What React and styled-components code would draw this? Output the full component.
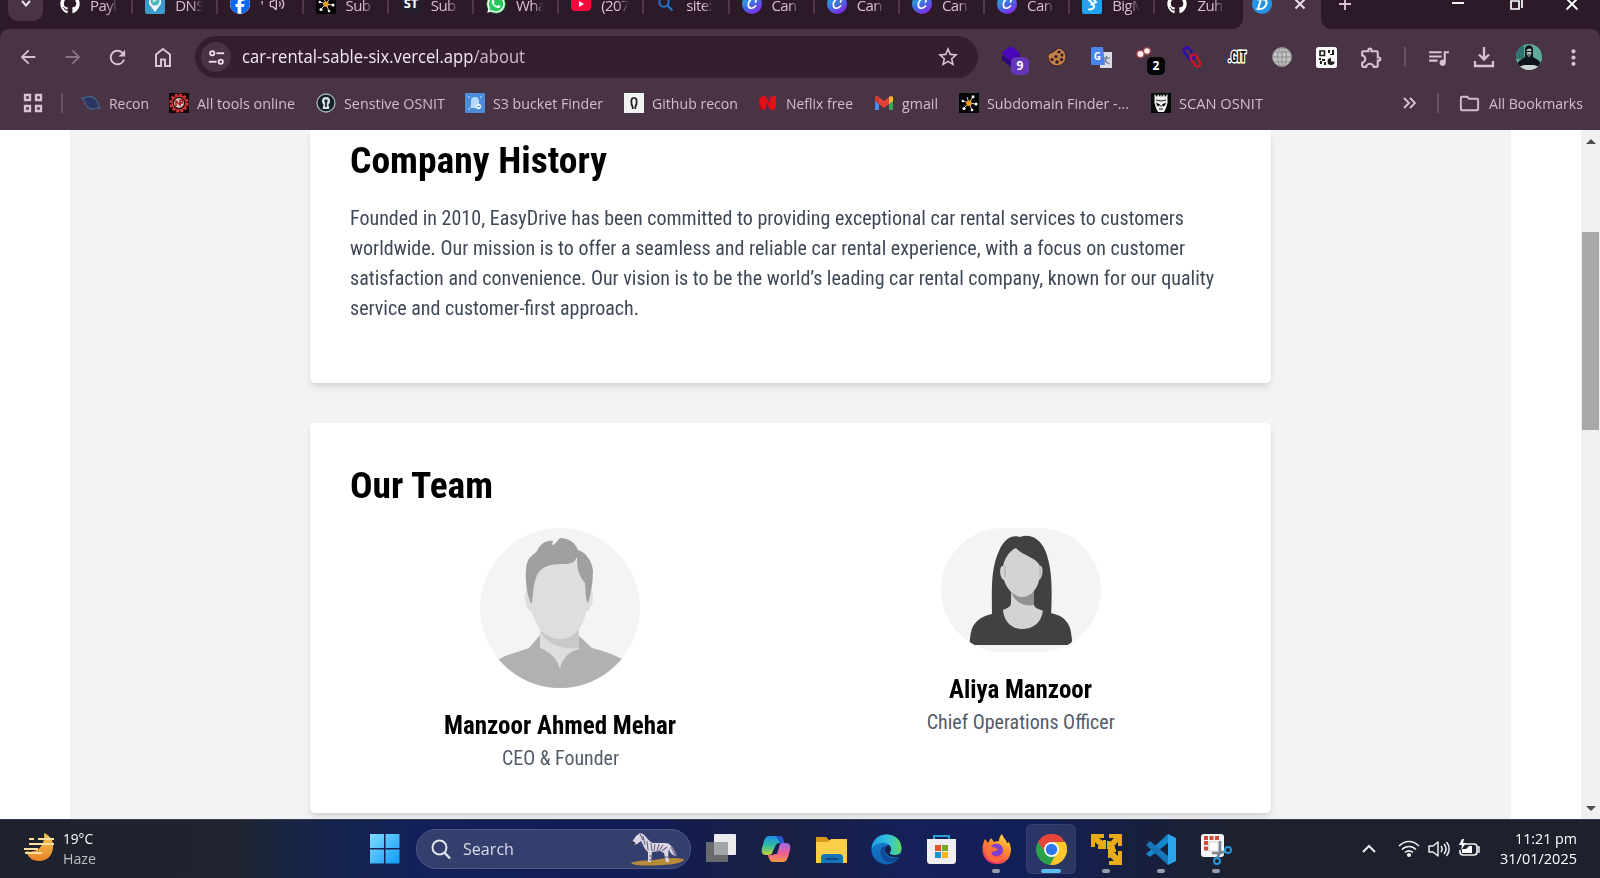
import React, { useLayoutEffect, useRef, useState } from "react";
import styled, { createGlobalStyle } from "styled-components";
import { FaGithub, FaFacebook, FaWhatsapp } from "react-icons/fa6";
import {
  MdArrowBack,
  MdArrowForward,
  MdRefresh,
  MdStarBorder,
  MdQueueMusic,
  MdOutlineExtension,
  MdMoreVert,
  MdOutlineFolder,
} from "react-icons/md";
import { Volume2 } from "lucide-react";

const ui = `"Segoe UI", "Open Sans", "Noto Sans", sans-serif`;
const condensed = `"Roboto Condensed", Roboto, sans-serif`;
const frame = "#493445";
const strip = "#2c1a29";
const tint = "#d9c0d2";

const Global = createGlobalStyle`
  * { box-sizing: border-box; }
  body { margin: 0; overflow: hidden; background: #fff; font-family: ${ui}; }
  svg { display: block; flex: none; }
  h2, h3, p { margin: 0; }
`;

/* Text squeezed or stretched to a given width. */
const FitBox = styled.span`
  display: block;
  flex: none;
  width: ${(p) => p.$w}px;
  white-space: nowrap;
`;
const FitInner = styled.span`
  display: inline-block;
  transform-origin: 0 50%;
`;
function Fit({ w, children }) {
  const ref = useRef(null);
  const [scale, setScale] = useState(1);
  useLayoutEffect(() => {
    const natural = ref.current.getBoundingClientRect().width;
    if (natural) setScale(w / natural);
  }, [w]);
  return (
    <FitBox $w={w}>
      <FitInner ref={ref} style={{ transform: `scaleX(${scale})` }}>{children}</FitInner>
    </FitBox>
  );
}

const Screen = styled.div`
  width: 1600px;
  height: 878px;
  display: flex;
  flex-direction: column;
  overflow: hidden;
`;

/* ---------- Browser frame ---------- */
const Chrome = styled.header`
  flex: none;
  height: 130px;
  background: ${strip};
  color: ${tint};
`;
const Strip = styled.div`
  height: 29px;
  display: flex;
  background: ${frame};
`;
const TabsPanel = styled.div`
  flex: none;
  width: 1243px;
  display: flex;
  padding-left: 8px;
  background: ${strip};
  border-bottom-right-radius: 11px;
`;
const TabSearch = styled.div`
  flex: none;
  width: 35px;
  height: 21px;
  margin-right: 5px;
  background: ${frame};
  border-radius: 0 0 10px 10px;
  display: flex;
  justify-content: center;
`;
const Tab = styled.div`
  flex: none;
  width: 85.2px;
  height: 29px;
  display: flex;
  padding-left: 12px;
`;
const TabIcon = styled.div`
  width: 20px;
  height: 20px;
  margin-top: -6px;
  margin-right: 10px;
`;
const TabTitle = styled.div`
  width: 28px;
  height: 20px;
  margin-top: -5px;
  overflow: hidden;
  white-space: nowrap;
  font-size: 15px;
  line-height: 20px;
  letter-spacing: -0.6px;
  mask-image: linear-gradient(90deg, #000 60%, transparent 100%);
`;
const TabSound = styled.div`
  margin: -4px 0 0 -19px;
`;
const TabLine = styled.i`
  width: 2px;
  height: 14px;
  margin-left: auto;
  background: #51394c;
`;
const ActiveTab = styled.div`
  flex: none;
  width: 78px;
  display: flex;
  padding-left: 9px;
`;
const CloseCell = styled.div`
  margin: -4px 0 0 10px;
`;
const WindowPanel = styled.div`
  flex: 1;
  display: flex;
  background: ${strip};
  border-bottom-left-radius: 11px;
  padding-left: 16px;
`;
const WindowCell = styled.div`
  flex: none;
  width: ${(p) => p.$w}px;
  height: 20px;
  margin-top: -6px;
  margin-right: ${(p) => p.$mr || 0}px;
  display: flex;
  align-items: center;
  justify-content: center;
`;

const Bar = styled.div`
  height: 56px;
  padding-top: 7px;
  display: flex;
  background: ${frame};
  border-radius: 9px 9px 0 0;
`;
const NavButton = styled.div`
  flex: none;
  width: 45px;
  height: 42px;
  display: flex;
  align-items: center;
  justify-content: center;
  position: relative;
  opacity: ${(p) => (p.$dim ? 0.45 : 1)};
`;
const NavGroup = styled.div`
  flex: none;
  display: flex;
  width: 195px;
  padding-left: 5px;
`;
const Omnibox = styled.div`
  flex: none;
  width: 783px;
  height: 42px;
  border-radius: 21px;
  background: #341f30;
  display: flex;
  align-items: center;
  padding: 0 18px 0 6px;
`;
const SiteInfo = styled.div`
  width: 30px;
  height: 30px;
  border-radius: 50%;
  background: ${frame};
  display: flex;
  align-items: center;
  justify-content: center;
  margin-right: 11px;
`;
const Url = styled.div`
  flex: 1;
  padding-bottom: 2px;
  font-size: 17.5px;
  color: #f3e6f0;
`;
const UrlPath = styled.span`
  color: #cfb9c9;
`;
const Extensions = styled.div`
  display: flex;
  padding-left: 11px;
`;
const Badge = styled.b`
  position: absolute;
  left: ${(p) => p.$x}px;
  top: 21px;
  width: 18px;
  height: 18px;
  border-radius: 5px;
  background: ${(p) => p.$bg};
  color: #fff;
  font-size: 12px;
  line-height: 18px;
  text-align: center;
`;
const Divider = styled.i`
  flex: none;
  width: 2px;
  height: 20px;
  margin: ${(p) => p.$m};
  background: #6a5065;
`;

const Bookmarks = styled.nav`
  height: 45px;
  padding: 0 17px 9px 22.5px;
  display: flex;
  align-items: center;
  background: ${frame};
  color: #d3bccc;
  font-size: 15px;
`;
const Bookmark = styled.div`
  display: flex;
  align-items: center;
  gap: 8px;
  margin-right: ${(p) => p.$mr ?? 20.6}px;
`;
const BookmarkText = styled.div`
  padding-bottom: 1px;
`;
const Spacer = styled.div`
  flex: 1;
`;

/* ---------- Page ---------- */
const Viewport = styled.main`
  flex: none;
  height: 689px;
  display: flex;
  padding-left: 70px;
  background: #fff;
  overflow: hidden;
`;
const Content = styled.div`
  flex: none;
  width: 1441px;
  margin-right: 70px;
  background: #f2f3f5;
  display: flex;
  flex-direction: column;
  align-items: center;
  gap: 40px;
  font-family: ${condensed};
  font-stretch: 75%;
`;
const Card = styled.section`
  flex: none;
  width: 961px;
  height: ${(p) => p.$h}px;
  background: #fff;
  border-radius: ${(p) => (p.$cut ? "0 0 5px 5px" : "5px")};
  padding: ${(p) => (p.$cut ? 8 : 40)}px 40px 0;
  box-shadow: 0 5px 8px -1px rgba(0, 0, 0, 0.1), 0 2px 5px -2px rgba(0, 0, 0, 0.1);
`;
const Title = styled.h2`
  font-size: 37.5px;
  line-height: 45px;
  font-weight: 700;
  color: #000;
`;
const Paragraph = styled.p`
  margin-top: 19.5px;
  font-size: 20px;
  line-height: 30px;
  color: #3f4856;
`;
const Team = styled.div`
  margin-top: 20px;
  display: grid;
  grid-template-columns: 1fr 1fr;
  gap: 40px;
`;
const Member = styled.article`
  display: flex;
  flex-direction: column;
  align-items: center;
`;
const Portrait = styled.div`
  width: 160px;
  height: ${(p) => p.$h}px;
  border-radius: 80px;
  overflow: hidden;
  background: #f4f4f4;
`;
const Name = styled.h3`
  margin-top: 21px;
  font-size: 25px;
  line-height: 34px;
  font-weight: 700;
`;
const Role = styled.p`
  font-size: 20px;
  line-height: 30px;
  color: #525c68;
`;
const Scrollbar = styled.aside`
  flex: none;
  width: 19px;
  background: #f1f1f1;
  display: flex;
  flex-direction: column;
  align-items: center;
`;
const Arrow = styled.i`
  border: 5px solid transparent;
  border-top-width: ${(p) => (p.$up ? 0 : 5)}px;
  border-bottom-width: ${(p) => (p.$up ? 5 : 0)}px;
  border-${(p) => (p.$up ? "bottom" : "top")}-color: #4e4e4e;
  margin-top: ${(p) => (p.$up ? 9 : 0)}px;
`;
const Thumb = styled.div`
  width: 17px;
  height: 198px;
  margin: 88px 0 376px;
  background: #a8a8a8;
`;

/* ---------- Taskbar ---------- */
const Taskbar = styled.footer`
  flex: none;
  height: 59px;
  display: flex;
  color: #fff;
  border-top: 1px solid #343b4e;
  background: linear-gradient(90deg, #1e222c 0, #1e232d 235px, #182541 285px, #15234e 340px, #13205a 430px, #121c55 640px, #1a1f42 780px, #142057 900px, #132057 1040px, #181f3e 1140px, #1d212e 1240px, #1d212c 1600px);
`;
const Weather = styled.div`
  flex: none;
  width: 360px;
  padding: 9px 0 0 24px;
  display: flex;
  gap: 9px;
  font-size: 14.5px;
  line-height: 20px;
`;
const WeatherIcon = styled.div`
  margin-top: 4px;
`;
const Muted = styled.div`
  color: #b9bdc5;
`;
const Slot = styled.div`
  flex: none;
  position: relative;
  width: 50px;
  height: 50px;
  margin: 4px 5px 0 0;
  border-radius: 6px;
  display: flex;
  align-items: center;
  justify-content: center;
  background: ${(p) => (p.$active ? "rgba(255,255,255,.1)" : "none")};
  box-shadow: ${(p) => (p.$active ? "inset 0 0 0 1px rgba(255,255,255,.06)" : "none")};
`;
const Running = styled.i`
  position: absolute;
  bottom: 1px;
  left: calc(50% - ${(p) => (p.$active ? 10 : 4)}px);
  width: ${(p) => (p.$active ? 20 : 8)}px;
  height: 4px;
  border-radius: 2px;
  background: ${(p) => (p.$active ? "#5cbcf0" : "#9a9dab")};
`;
const SearchBox = styled.div`
  flex: none;
  width: 275px;
  height: 40px;
  margin: 9px 5px 0 1px;
  padding: 0 5px 0 14px;
  border-radius: 20px;
  border: 1px solid #4e5987;
  background: #343f6d;
  display: flex;
  align-items: center;
  color: #d9dcea;
  font-size: 17px;
`;
const SearchText = styled.div`
  flex: 1;
  padding: 0 0 2px 12px;
`;
const Tray = styled.div`
  margin-left: auto;
  padding-right: 23px;
  display: flex;
`;
const TrayIcon = styled.div`
  width: ${(p) => p.$w || 30}px;
  height: 58px;
  display: flex;
  align-items: center;
  justify-content: center;
`;
const Clock = styled.div`
  width: 93px;
  padding-top: 8px;
  display: flex;
  flex-direction: column;
  align-items: flex-end;
  font-size: 15px;
  line-height: 20px;
`;

/* ---------- Drawings ---------- */
const Svg = ({ s = 20, h, box = 20, boxH, children, ...rest }) => (
  <svg width={s} height={h || s} viewBox={`0 0 ${box} ${boxH || box}`} fill="none" {...rest}>{children}</svg>
);
const LetterText = styled.text`
  font-family: ${(p) => p.$f || ui};
  font-weight: ${(p) => p.$wt || 700};
  font-size: ${(p) => p.$s}px;
  text-anchor: middle;
`;

const PinIcon = () => (
  <Svg>
    <rect width="20" height="20" rx="2" fill="#3a9cca" />
    <path d="M10 18 4 10V4a6 6 0 0 1 12 0v6z" fill="#e8f7fa" />
    <circle cx="10" cy="7" r="4.5" fill="#55b5bd" />
    <path d="M8 7.5 12 5" stroke="#d8f6e2" strokeWidth="1.5" />
  </Svg>
);
const NodesIcon = () => (
  <Svg>
    <rect width="20" height="20" fill="#050505" />
    <path d="M10 10 4 8M10 10l4-6M10 10l7 1M10 10l-5 5M10 10l3 7M10 10 8 4" stroke="#fff" strokeWidth=".8" />
    <g fill="#fff">
      <circle cx="3.8" cy="8" r="1.2" /><circle cx="14" cy="3.8" r="1.5" /><circle cx="17" cy="11" r="1.5" />
      <circle cx="5" cy="15.5" r="1.6" /><circle cx="13" cy="17" r="1.3" />
    </g>
    <circle cx="10" cy="10.3" r="2.7" fill="#f0a01c" />
  </Svg>
);
const StIcon = () => (
  <Svg>
    <rect width="20" height="20" rx="4" fill="#241e2e" />
    <LetterText $s={13} x="10" y="14" fill="#fff">ST</LetterText>
  </Svg>
);
const YoutubeIcon = () => (
  <Svg><rect y="2.5" width="20" height="14.5" rx="4" fill="#f9083b" /><path d="m8 7 5 3-5 3z" fill="#fff" /></Svg>
);
const LensIcon = () => (
  <Svg><circle cx="8" cy="8" r="4.7" stroke="#1f76c4" strokeWidth="2" /><path d="m11.5 11.5 5 5" stroke="#1f76c4" strokeWidth="2.2" /></Svg>
);
const CanvaIcon = () => (
  <Svg>
    <defs><linearGradient id="canva" x1="0" y1="0" x2=".6" y2="1"><stop stopColor="#1bc6d5" /><stop offset=".55" stopColor="#3e72e2" /><stop offset="1" stopColor="#7e2ce8" /></linearGradient></defs>
    <circle cx="10" cy="10" r="10" fill="url(#canva)" />
    <path d="M13.5 8c1.2-2-.2-4.200-2.200-3.800C8 5 6 8.500 6.400 11.600c.4 3.200 4 3.700 7.200.4" stroke="#fff" strokeWidth="1.700" strokeLinecap="round" />
  </Svg>
);
const BigIcon = () => (
  <Svg><rect width="20" height="20" rx="2" fill="#20a2ee" /><path d="M6 5l5 5M11 5l3 3-4 2.500c4 1 2 5-3 5" stroke="#fff" strokeWidth="2" strokeLinecap="round" /></Svg>
);
const BlueDIcon = () => (
  <Svg>
    <circle cx="10" cy="10" r="10" fill="#2495e5" />
    <path d="M9 5 6 15M6 5.5c8-1.5 9.500 1.500 8 5.500-1.200 3.300-4.500 4.300-8.500 4" stroke="#fff" strokeWidth="2.100" strokeLinecap="round" />
  </Svg>
);
const WhatsIcon = () => (
  <Svg>
    <circle cx="10" cy="10" r="9.5" fill="#27c75c" />
    <FaWhatsapp size={20} color="#fff" />
  </Svg>
);

const Home = () => (
  <Svg s={24} box={24}><path d="M5 21V9.5L12 4l7 5.500V21h-5v-6.500h-4V21z" stroke={tint} strokeWidth="2" /></Svg>
);
const TuneIcon = () => (
  <Svg s={17} box={20} stroke="#f0dfeb" strokeWidth="2.2">
    <circle cx="5" cy="5" r="2.5" /><path d="M10 5h9" /><circle cx="15" cy="15" r="2.5" /><path d="M1 15h9" />
  </Svg>
);
const CubeIcon = () => (
  <Svg s={22} box={22}><path d="m0 7 10-7 9 7-9 8z" fill="#4a05bd" /><path d="m1 9 9 6v6L1 14z" fill="#2c0680" /><path d="m10 15 9-8v8l-9 6z" fill="#3a0a98" /></Svg>
);
const CookieIcon = () => (
  <Svg>
    <path d="M10.500 1c5 .3 8.500 4 8.500 9a9 9 0 0 1-18 0c0-1.500.3-3 1-4 1 .8 2 .3 2.500-.6 1.300.4 2.500-.4 2.300-1.700C8.500 3.700 10 2.500 10.500 1z" fill="#c08050" stroke="#3a1e18" strokeWidth="1" />
    <g fill="#321712"><circle cx="12" cy="5" r="1.600" /><circle cx="9" cy="9.5" r="1.600" /><circle cx="5" cy="12.500" r="1.600" /><circle cx="10" cy="15" r="1.700" /><circle cx="14.500" cy="12.500" r="1.700" /><circle cx="15" cy="8" r="1.500" /></g>
  </Svg>
);
const TranslateIcon = () => (
  <Svg s={21} box={21}>
    <rect x="9" y="5" width="12" height="16" fill="#d9dce0" />
    <path d="M12 11h7M15.500 9v2c-.5 3-2 4-3 5M14 12c1 3 2 4 4.500 5" stroke="#6d7b8c" strokeWidth="1.200" />
    <path d="M1 0h11l2 18H1a1 1 0 0 1-1-1V1z" fill="#4b83ea" />
    <LetterText $s={10} x="6.300" y="12.500" fill="#fff">G</LetterText>
  </Svg>
);
const GlowIcon = () => (
  <Svg s={22} box={22}>
    <g fill="#c54b52" opacity=".65"><circle cx="4.500" cy="8" r="4.500" /><circle cx="11" cy="5" r="4.300" /></g>
    <circle cx="4.500" cy="8" r="3" fill="#ffeceb" /><circle cx="11" cy="5" r="2.800" fill="#ffeceb" />
  </Svg>
);
const ChainIcon = () => (
  <Svg s={22} box={22} strokeWidth="2.200">
    <rect x="5" y="1" width="6" height="13" rx="3" stroke="#2b08b8" transform="rotate(-35 8 7.500)" />
    <rect x="11.500" y="8" width="6" height="13" rx="3" stroke="#cf1525" transform="rotate(-32 14.500 14.500)" />
  </Svg>
);
const GitIcon = () => (
  <Svg s={24} box={24}>
    <LetterText $f={condensed} $wt={700} $s={14} x="12" y="17" fill="#111" stroke="#fff" strokeWidth="3" paintOrder="stroke" textLength="18" lengthAdjust="spacingAndGlyphs">.GIT</LetterText>
  </Svg>
);
const GlobeIcon = () => (
  <Svg stroke="#8c8c8c" strokeWidth="1">
    <circle cx="10" cy="10" r="9.5" fill="#c4c4c4" /><ellipse cx="10" cy="10" rx="4.5" ry="9.5" /><path d="M10 .5v19M.5 10h19M2 5h16M2 15h16" />
  </Svg>
);
const QrIcon = () => (
  <Svg s={21} box={21}>
    <rect width="21" height="21" rx="2.5" fill="#fbfbfb" />
    <path d="M4 4h4.500v4.500H4z" stroke="#1b1b1b" strokeWidth="1.600" />
    <path d="M12 3h2v3h-2zM16 3h2v5h-4V7h2zM3 11h2v2H3zM6 12h3v2H6zM4 14h2v3H4zM8 15h2v3H8z" fill="#1b1b1b" />
    <path d="M15 11v3.500h3.500a3.500 3.500 0 1 1-3.500-3.500z" fill="#1b1b1b" />
  </Svg>
);
const DownloadIcon = () => (
  <Svg s={22} box={22} stroke={tint} strokeWidth="2.3"><path d="M11 1v12M6 8.500l5 5 5-5M2 15v5h18v-5" /></Svg>
);
const Avatar = () => (
  <Svg s={26} box={26}>
    <defs><clipPath id="ava"><circle cx="13" cy="13" r="13" /></clipPath></defs>
    <g clipPath="url(#ava)">
      <rect width="26" height="26" fill="#5cab9c" /><rect width="8" height="15" fill="#2e7570" />
      <path d="M0 22c3-7 7-7 9-9V5c1-5 7-5 8 0v8c3 2 6 2 9 9z" fill="#10151b" />
      <path d="M10.500 6c2-2 4-2 5 0l-.5 5-2 2-2-2z" fill="#b6bdb8" /><path d="M10 7.500h6M11.500 11h3" stroke="#10151b" />
      <path d="M5 26v-4l3-1h10l3 1v4z" fill="#ccd6d4" />
    </g>
  </Svg>
);

const AppsIcon = () => (
  <Svg stroke={tint} strokeWidth="2.3"><path d="M2 2h5v5H2zM13 2h5v5h-5zM2 13h5v5H2zM13 13h5v5h-5z" /></Svg>
);
const ReconIcon = () => (
  <Svg><path d="M1 5h3c3-2 9-2 11 2 2 2 2 5 4 8h-3c-4 2-9 1-11-3-1-2-1-4-4-7z" fill="#2b3461" stroke="#446187" strokeWidth="1.300" /></Svg>
);
const GearIcon = () => (
  <Svg>
    <rect width="20" height="20" fill="#120808" /><circle cx="10" cy="10" r="8.600" stroke="#df3b42" strokeWidth="2" strokeDasharray="2.800 1.700" />
    <circle cx="10" cy="10" r="7" stroke="#dd3037" strokeWidth="1.400" /><circle cx="10" cy="10" r="5" fill="#d8c5b9" />
    <path d="M7 13V8l4 4V7h2.500v3H11" stroke="#a61620" strokeWidth="1.500" />
  </Svg>
);
const KeyholeIcon = () => (
  <Svg>
    <circle cx="10" cy="10" r="9" fill="#15212a" stroke="#a8b4b8" strokeWidth="1.300" />
    <circle cx="10" cy="8" r="4" fill="#d9e3e6" /><path d="m8 10-1.500 6h7L12 10z" fill="#d9e3e6" />
    <circle cx="10" cy="8" r="1.700" fill="#17242b" /><path d="M10 8v6" stroke="#17242b" strokeWidth="1.700" />
  </Svg>
);
const BucketIcon = () => (
  <Svg>
    <rect width="20" height="20" rx="1" fill="#4d8cda" /><path d="M6 12V8a4 4 0 0 1 8 0v4l-2 3H5z" fill="#b7dafa" />
    <path d="M3 4h2M15 4h2M3 16h2" stroke="#bfe0fa" /><circle cx="13.500" cy="13.500" r="2.700" fill="#e6f3fd" /><path d="M12 13.500h3" stroke="#4d8cda" />
  </Svg>
);
const ReconGitIcon = () => (
  <Svg><rect width="20" height="20" fill="#f2f2f2" /><path d="M8.700 16v-2C6.800 11 6.800 5 9.300 5h1.400c2.500 0 2.500 6 .6 9v2" stroke="#1b1b1b" strokeWidth="1.700" /></Svg>
);
const NIcon = () => (
  <Svg><path d="M2 5l5-2v12l-5 2z" fill="#a90d15" /><path d="M12 5l6-2v11l-5 3z" fill="#b70d17" /><path d="M1 9c0-5 5-8 7-5l4 7V5l2-2h4v10c-1 4-4 6-6 3L8 9v7l-3 1" fill="#e31019" /></Svg>
);
const GmailIcon = () => (
  <Svg>
    <path d="M1 7v10h4V9z" fill="#4c8bf5" /><path d="M15 9v8h4V6z" fill="#34a853" /><path d="m1 8 9 7 9-7V5c0-2-2-2.500-3.500-1.300L10 8 4.500 3.700C3 2.500 1 3 1 5z" fill="#e34234" /><path d="M15 4c2-1.500 4-.5 4 1v3l-4 3z" fill="#f8bd24" /><path d="M1 5v3l4 3V5z" fill="#c53a31" />
  </Svg>
);
const SkullIcon = () => (
  <Svg>
    <rect width="20" height="20" fill="#080808" /><path d="m3.500 1 2.500 3 1-3 2 3 1-3 1 3 2-3 1 3 2.500-3v9l-1.500 5-2 4H7l-2-4-1.500-5z" fill="#f0f0f0" />
    <path d="m5 9.500 4 2-1 2-2-1zm10 0-4 2 1 2 2-1z" fill="#080808" />
    <path d="M8 16h4M5 7l5 1 5-1M10 12v2" stroke="#080808" strokeWidth=".9" />
  </Svg>
);

const ManPortrait = () => (
  <Svg s={160} box={160}>
    <path d="M19 131c12-6 23-8 30-11l11-13h38l14 13c12 3 20 6 30 11v29H19z" fill="#b1b1b1" />
    <path d="M60 98h39v23c-10 3-17 9-19 20-3-11-10-17-20-21z" fill="#dedede" />
    <path d="M60 104c8 14 25 18 39 16v-17z" fill="#c9c9c9" />
    <path d="M48 61c-5 1-4 20 4 23 4 17 16 27 28 27s23-10 26-27c8-3 9-22 4-23V32H48z" fill="#dedede" />
    <path d="M51 75c-6-13-6-32-4-40 2-7 8-9 10-12 3-7 9-11 16-10l-1 4c3 0 5-4 8-7 8 0 15 4 18 12 7 2 14 10 15 21 0 11-2 22-5 32-3-2-2-14-3-20-6-7-8-14-8-26-2 5-6 7-11 7-16 0-26 2-30 14-3 8-3 17-4 25z" fill="#9f9f9f" />
  </Svg>
);
const WomanPortrait = () => (
  <Svg s={160} h={124} box={160} boxH={124}>
    <path d="M51 90c0-24-2-48 7-67 6-14 14-16 21-14 9-4 20 1 25 13 8 19 7 43 6 68z" fill="#414141" />
    <path d="M29 111c1-15 7-20 18-24 8-2 16-5 20-8h29c7 5 16 6 23 9 10 6 11 14 12 24 0 3-2 5-5 5H33c-3 0-5-2-4-6z" fill="#414141" />
    <path d="M70 60h23v17c1 4 6 4 9 6-2 12-10 18-21 18S63 93 62 82c4-2 8-3 8-7z" fill="#d3d3d3" />
    <path d="M70 64c4 10 12 15 23 13V62z" fill="#919191" />
    <path d="M75 20c7 8 20 9 24 18 4-1 3 12-1 14-2 11-10 17-17 17s-15-7-18-17c-5-2-5-15-1-14 2-8 6-15 13-18z" fill="#d3d3d3" />
    <path d="M64 38v11M99 37v12" stroke="#aaa" />
  </Svg>
);

const HazeIcon = () => (
  <Svg s={30} box={30}>
    <defs><linearGradient id="moon" x1="0" y1="0" x2="0" y2="1"><stop stopColor="#f6cc4f" /><stop offset="1" stopColor="#e8822a" /></linearGradient></defs>
    <path d="M20 0c7 3 10 9 9 15-1 9-7 13-14 13S4 24 2 18c10 3 20-5 18-18z" fill="url(#moon)" />
    <path d="M5 6h5M14 6h16M5 11h25M0 16h14M1 20h17" stroke="#fae0a3" strokeWidth="2" />
  </Svg>
);
const WindowsIcon = () => (
  <Svg s={30} box={30}>
    <defs><linearGradient id="win" x1="0" y1="0" x2="1" y2="1"><stop stopColor="#7fdbff" /><stop offset="1" stopColor="#109bf7" /></linearGradient></defs>
    <path d="M0 0h14v14H0zM15.500 0h14v14h-14zM0 15.500h14v14H0zM15.500 15.500h14v14h-14z" fill="url(#win)" />
  </Svg>
);
const SearchIcon = () => (
  <Svg s={20}><circle cx="8.500" cy="8.500" r="7" stroke="#dfe2ee" strokeWidth="2" /><path d="m13.500 13.500 5.500 6" stroke="#dfe2ee" strokeWidth="2.400" /></Svg>
);
const Zebra = () => (
  <Svg s={54} h={34} box={54} boxH={34}>
    <path d="M0 31c7-3 15-2 23-3 10-2 19-3 30-1 1 3-11 6-23 6-11 1-27 1-30-2z" fill="#b88b3b" />
    <path d="m1 10 4-6 4-3 3 1c4 3 6 8 10 9h12c5 0 7 3 8 8 0 3 2 4 3 5-5-1-6-4-7-7-1 4-1 8 0 13h-3l-2-9-4-2-8 1-1 10h-3V20c-4-3-5-8-7-11l-4 3-3 1z" fill="#dcd7e7" />
    <path d="M9 2l3 6M12 4l2 9M16 9l1 9M20 11l1 8M24 12l-1 7M28 12l-2 7M32 13l-4 6M36 15l-5 4M18 24h4M34 25h3M18 28h4" stroke="#6a6380" strokeWidth="1.100" />
    <path d="M40 15c3 2 3 7 5 9" stroke="#8d83a4" strokeWidth="2.400" /><path d="m1 10 3 2" stroke="#37323f" strokeWidth="2.500" />
  </Svg>
);
const TaskViewIcon = () => (
  <Svg s={32} box={32}><rect x="1" y="9" width="22" height="20" rx="1" fill="#696a6d" /><rect x="9" y="1" width="22" height="21" rx="1" fill="#ececee" /><path d="M9 9h14v13H9z" fill="#a2a5a7" /></Svg>
);
const CopilotIcon = () => (
  <Svg s={30} box={30}>
    <defs>
      <linearGradient id="co1" x1="0" y1="0" x2="0" y2="1"><stop stopColor="#198ee8" /><stop offset=".5" stopColor="#2fbba0" /><stop offset="1" stopColor="#c9d53d" /></linearGradient>
      <linearGradient id="co2" x1="0" y1="0" x2="0" y2="1"><stop stopColor="#a169e8" /><stop offset=".55" stopColor="#ef5f91" /><stop offset="1" stopColor="#f59742" /></linearGradient>
    </defs>
    <path d="M8 2h10c2 0 4 2 5 7h-4c-3 0-4 1-5 4l-2 4c-1 3-2 4-5 4H5c-4 0-5-3-4-7l2-7c1-3 2-5 5-5z" fill="url(#co1)" />
    <path d="M15 2h4c2 0 4 2 4 7h-3c-2 0-3-4-5-7z" fill="#2356cf" />
    <path d="M22 28H12c-2 0-4-2-5-7h3c3 0 4-1 5-4l2-4c1-3 2-4 5-4h3c4 0 5 3 4 7l-2 7c-1 3-2 5-5 5z" fill="url(#co2)" />
    <path d="M13 16l3-6h3l-3 10h-4z" fill="#141e50" />
  </Svg>
);
const FolderIcon = () => (
  <Svg s={31} box={31}><path d="M0 3h10l3 3h18v6H0z" fill="#d89b19" /><path d="M0 8h12l3-3h16v24H0z" fill="#fbcd4b" /><path d="M5 29v-5c0-3 1-4 4-4h14c3 0 4 1 4 4v5z" fill="#1673b8" /><path d="M10 25h12" stroke="#0b4a82" strokeWidth="2" /></Svg>
);
const EdgeIcon = () => (
  <Svg s={31} box={31}>
    <defs>
      <linearGradient id="ed1"><stop stopColor="#1e9de8" /><stop offset=".6" stopColor="#35c5d6" /><stop offset="1" stopColor="#63da59" /></linearGradient>
      <linearGradient id="ed2" x1="0" y1="0" x2="0" y2="1"><stop stopColor="#1684d5" /><stop offset="1" stopColor="#1260b4" /></linearGradient>
    </defs>
    <circle cx="15.500" cy="15.500" r="15" fill="url(#ed2)" />
    <path d="M1 12C4-4 30-3 30.500 14c0 5-4 8-9 7-3 0-4-1-2-3 2-3 0-8-5-9-6-1-11 1-14 6z" fill="url(#ed1)" />
    <path d="M12 12c-5 5-2 14 5 16 5 1 9-1 12-5-4 2-13 2-15-4-1-3 0-5 2-6z" fill="#0e4a97" />
    <path d="M19 18c2-2 1-5-1-7-3 0-4 2-4 6 2 6 9 7 15 6l1-3c-5 2-13 1-11-2z" fill="#15234b" />
  </Svg>
);
const StoreIcon = () => (
  <Svg s={31} box={31}><path d="M8 8V2h15v6" stroke="#2a9fd0" strokeWidth="2" /><path d="M1 5h29v21c0 3-1 4-4 4H5c-3 0-4-1-4-4z" fill="#efeff1" /><path d="M9 11h6v6H9z" fill="#e65327" /><path d="M16 11h6v6h-6z" fill="#75a923" /><path d="M9 18h6v6H9z" fill="#1795d3" /><path d="M16 18h6v6h-6z" fill="#f6b51b" /></Svg>
);
const FirefoxIcon = () => (
  <Svg s={31} box={31}>
    <defs><linearGradient id="ff" x1=".8" y1="0" x2=".3" y2="1"><stop stopColor="#ffe24c" /><stop offset=".45" stopColor="#ff8a2c" /><stop offset="1" stopColor="#f52d68" /></linearGradient></defs>
    <path d="M4 5l3 4 3-5 3 4c2-1 4-1 5-1 0-3 1-5 3-7 1 4 4 5 5 9l2-1c5 10 0 22-12 22C3 30-2 17 4 5z" fill="url(#ff)" />
    <path d="M10 12c3-4 12-3 12 4 0 8-12 8-13 1 3 2 6 0 8-2-2 0-5-1-7-3z" fill="#7f3fcf" /><path d="M4 12c3-2 6 0 8 1l4 1c-1 2-3 2-5 3-2 6 6 10 12 5-3 10-17 7-19-4z" fill="#ff7139" opacity=".75" />
  </Svg>
);
const ChromeIcon = () => (
  <Svg s={31} box={30}>
    <path d="M2 7.500a15 15 0 0 0 11.500 22.400L20 19l-5-4z" fill="#2ba24c" /><path d="M28 7.500a15 15 0 0 1-14.500 22.400L20.500 17 16 7.500z" fill="#fcc92d" />
    <path d="M2 7.500A15 15 0 0 1 28 7.500H15L9 18z" fill="#e6453a" /><circle cx="15" cy="15" r="7.200" fill="#fff" /><circle cx="15" cy="15" r="5.600" fill="#2d78eb" />
  </Svg>
);
const ArrowsIcon = () => (
  <Svg s={31} box={31} fill="#e7ab16">
    <path d="M0 0h13v4H8l4 3V6h3v9H7v-3h1L4 8v5H0zM18 0h13v12h-4V8l-4 4h1v3h-8V7h3v1l4-4h-5zM31 17v14H18v-4h5l-4-4v1h-2v-9h8v3h-2l4 4v-5z" />
  </Svg>
);
const CodeIcon = () => (
  <Svg s={31} box={31}>
    <path d="M22 0v9L4 23l-4-3L22 0z" fill="#1584cb" /><path d="m0 11 4-4 18 15v9z" fill="#1676b8" /><path d="M22 0l8 4v23l-8 4z" fill="#2ca5ec" />
  </Svg>
);
const SnipIcon = () => (
  <Svg s={32} box={32}>
    <rect x="1" y="1" width="23" height="23" rx="3" fill="#f4f4f4" /><path d="M4 5h15M6 8v11" stroke="#ce4b38" strokeWidth="4" strokeDasharray="4 1.500" /><rect x="9" y="9" width="9" height="9" fill="#fff" stroke="#d4d4d4" />
    <path d="M20 8v12l-3 5M12 20h9l5-2" stroke="#7a8790" strokeWidth="2.600" /><circle cx="17" cy="28" r="3" stroke="#2499d9" strokeWidth="2" /><circle cx="28" cy="17" r="3" stroke="#2499d9" strokeWidth="2" />
  </Svg>
);
const WifiIcon = () => (
  <Svg s={22} box={22} stroke="#eee" strokeWidth="1.600"><path d="M1 8c6-6 14-6 20 0M4 11.500c4-4 10-4 14 0M7 14.500c3-2.500 5-2.500 8 0" /><circle cx="11" cy="17" r="1.300" fill="#eee" /></Svg>
);
const SoundIcon = () => (
  <Svg s={22} box={22} stroke="#eee" strokeWidth="1.500" strokeLinejoin="round"><path d="M1 8h4l5-4v14l-5-4H1zM13 8c1.500 2 1.500 4 0 6M16 6c2.500 3 2.500 7 0 10M18.500 4c3.500 4 3.500 10 0 14" /></Svg>
);
const BatteryIcon = () => (
  <Svg s={22} box={22}><path d="M7 6h9c2 0 3 1 3 3v5c0 2-1 3-3 3H5c-2 0-3-1-3-3v-2" stroke="#eee" strokeWidth="1.700" /><path d="M20 9h1v5h-1" stroke="#eee" strokeWidth="1.500" /><path d="M4 15v-4h4l3-3h3v7zM4 1 1 7h3l-1 5 5-7H5l1-4z" fill="#fff" /></Svg>
);

const tabs = [
  ["Payl", <FaGithub size={20} color="#fff" />],
  ["DNS", <PinIcon />],
  ["'", <FaFacebook size={20} color="#0a66f5" style={{ background: "#fff", borderRadius: "50%" }} />, true],
  ["Sub", <NodesIcon />],
  ["Sub", <StIcon />],
  ["Wha", <WhatsIcon />],
  ["(207", <YoutubeIcon />],
  ["site:", <LensIcon />],
  ["Can", <CanvaIcon />],
  ["Can", <CanvaIcon />],
  ["Can", <CanvaIcon />],
  ["Can", <CanvaIcon />],
  ["BigM", <BigIcon />],
  ["Zuh", <FaGithub size={20} color="#fff" />],
];

const bookmarks = [
  ["Recon", 40, <ReconIcon />],
  ["All tools online", 98, <GearIcon />],
  ["Senstive OSNIT", 101, <KeyholeIcon />],
  ["S3 bucket Finder", 110, <BucketIcon />],
  ["Github recon", 86, <ReconGitIcon />],
  ["Neflix free", 67, <NIcon />],
  ["gmail", 36, <GmailIcon />],
  ["Subdomain Finder -...", 142, <NodesIcon />, 22],
  ["SCAN OSNIT", 84, <SkullIcon />],
];

const apps = [
  [<TaskViewIcon />], [<CopilotIcon />], [<FolderIcon />], [<EdgeIcon />], [<StoreIcon />],
  [<FirefoxIcon />, true], [<ChromeIcon />, true, true], [<ArrowsIcon />, true], [<CodeIcon />, true], [<SnipIcon />, true],
];

const history = [
  ["Founded in 2010, EasyDrive has been committed to providing exceptional car rental services to customers", 834],
  ["worldwide. Our mission is to offer a seamless and reliable car rental experience, with a focus on customer", 835],
  ["satisfaction and convenience. Our vision is to be the world’s leading car rental company, known for our quality", 864],
  ["service and customer-first approach.", 289],
];

export default function App() {
  return (
    <Screen>
      <Global />
      <Chrome>
        <Strip>
          <TabsPanel>
            <TabSearch><Svg s={14} box={14} stroke="#f0e2ec" strokeWidth="2"><path d="m3 1 4 4.5L11 1" /></Svg></TabSearch>
            {tabs.map(([title, icon, sound], i) => (
              <Tab key={i}>
                <TabIcon>{icon}</TabIcon>
                <TabTitle>{title}</TabTitle>
                {sound && <TabSound><Volume2 size={16} /></TabSound>}
                {i < 13 && <TabLine />}
              </Tab>
            ))}
          </TabsPanel>
          <ActiveTab>
            <TabIcon><BlueDIcon /></TabIcon>
            <CloseCell><Svg s={16} box={16} stroke="#ecdde8" strokeWidth="2"><path d="m3.500 3.500 9 9m0-9-9 9" /></Svg></CloseCell>
          </ActiveTab>
          <WindowPanel>
            <WindowCell $w={16} $mr={76}><Svg s={16} box={16} stroke={tint} strokeWidth="1.9"><path d="M8 2v12M2 8h12" /></Svg></WindowCell>
            <WindowCell $w={58}><Svg s={14} box={14} stroke="#fff" strokeWidth="1.9"><path d="M1 6h12" /></Svg></WindowCell>
            <WindowCell $w={57}><Svg s={14} box={14} stroke="#fff" strokeWidth="1.7"><path d="M2 4h8v8H2zM4 1h6q3 0 3 3v7" /></Svg></WindowCell>
            <WindowCell $w={56}><Svg s={14} box={14} stroke="#fff" strokeWidth="1.9"><path d="m1.500 1.500 11 11m0-11-11 11" /></Svg></WindowCell>
          </WindowPanel>
        </Strip>
        <Bar>
          <NavGroup>
            <NavButton><MdArrowBack size={22} /></NavButton>
            <NavButton $dim><MdArrowForward size={22} /></NavButton>
            <NavButton><MdRefresh size={23} /></NavButton>
            <NavButton><Home /></NavButton>
          </NavGroup>
          <Omnibox>
            <SiteInfo><TuneIcon /></SiteInfo>
            <Url><Fit w={283}>car-rental-sable-six.vercel.app<UrlPath>/about</UrlPath></Fit></Url>
            <MdStarBorder size={24} />
          </Omnibox>
          <Extensions>
            <NavButton><CubeIcon /><Badge $x={22} $bg="#6536b8">9</Badge></NavButton>
            <NavButton><CookieIcon /></NavButton>
            <NavButton><TranslateIcon /></NavButton>
            <NavButton><GlowIcon /><Badge $x={23} $bg="#050505">2</Badge></NavButton>
            <NavButton><ChainIcon /></NavButton>
            <NavButton><GitIcon /></NavButton>
            <NavButton><GlobeIcon /></NavButton>
            <NavButton><QrIcon /></NavButton>
            <NavButton><MdOutlineExtension size={25} /></NavButton>
            <Divider $m="11px 10px 0 10px" />
            <NavButton><MdQueueMusic size={25} /></NavButton>
            <NavButton><DownloadIcon /></NavButton>
            <NavButton><Avatar /></NavButton>
            <NavButton><MdMoreVert size={25} /></NavButton>
          </Extensions>
        </Bar>
        <Bookmarks>
          <AppsIcon />
          <Divider $m="0 18px 0 18px" />
          {bookmarks.map(([label, w, icon, mr]) => (
            <Bookmark key={label} $mr={mr}>{icon}<BookmarkText><Fit w={w}>{label}</Fit></BookmarkText></Bookmark>
          ))}
          <Spacer />
          <Svg s={14} box={14} stroke={tint} strokeWidth="1.9"><path d="m2 2 5 5-5 5M8 2l5 5-5 5" /></Svg>
          <Divider $m="0 19px 0 21px" />
          <Bookmark $mr={0}><MdOutlineFolder size={23} /><BookmarkText><Fit w={94}>All Bookmarks</Fit></BookmarkText></Bookmark>
        </Bookmarks>
      </Chrome>

      <Viewport>
        <Content>
          <Card $h={253} $cut>
            <Title><Fit w={257}>Company History</Fit></Title>
            <Paragraph>{history.map(([line, w]) => <Fit key={w} w={w}>{line}</Fit>)}</Paragraph>
          </Card>
          <Card $h={390}>
            <Title><Fit w={143}>Our Team</Fit></Title>
            <Team>
              <Member>
                <Portrait $h={160}><ManPortrait /></Portrait>
                <Name><Fit w={232}>Manzoor Ahmed Mehar</Fit></Name>
                <Role><Fit w={117}>CEO &amp; Founder</Fit></Role>
              </Member>
              <Member>
                <Portrait $h={124}><WomanPortrait /></Portrait>
                <Name><Fit w={143}>Aliya Manzoor</Fit></Name>
                <Role><Fit w={188}>Chief Operations Officer</Fit></Role>
              </Member>
            </Team>
          </Card>
        </Content>
        <Scrollbar><Arrow $up /><Thumb /><Arrow /></Scrollbar>
      </Viewport>

      <Taskbar>
        <Weather>
          <WeatherIcon><HazeIcon /></WeatherIcon>
          <div>
            <Fit w={30}>19°C</Fit>
            <Muted><Fit w={33}>Haze</Fit></Muted>
          </div>
        </Weather>
        <Slot><WindowsIcon /></Slot>
        <SearchBox>
          <SearchIcon />
          <SearchText><Fit w={51}>Search</Fit></SearchText>
          <Zebra />
        </SearchBox>
        {apps.map(([icon, running, active], i) => (
          <Slot key={i} $active={active}>{icon}{running && <Running $active={active} />}</Slot>
        ))}
        <Tray>
          <TrayIcon $w={50}><Svg s={16} box={16} stroke="#eee" strokeWidth="2"><path d="m2 11 6-6 6 6" /></Svg></TrayIcon>
          <TrayIcon><WifiIcon /></TrayIcon>
          <TrayIcon><SoundIcon /></TrayIcon>
          <TrayIcon><BatteryIcon /></TrayIcon>
          <Clock><Fit w={62}>11:21 pm</Fit><Fit w={77}>31/01/2025</Fit></Clock>
        </Tray>
      </Taskbar>
    </Screen>
  );
}
